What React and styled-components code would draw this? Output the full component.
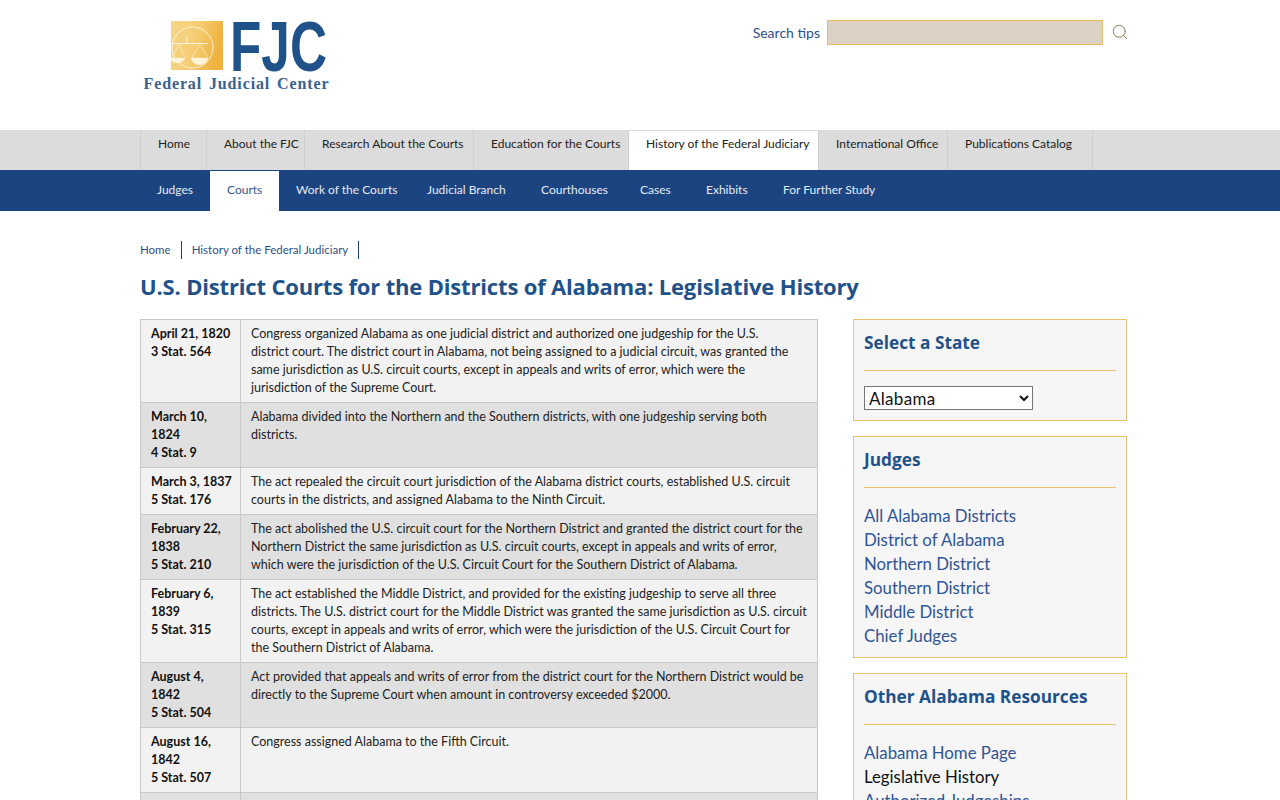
import React from 'react';
import styled, { createGlobalStyle } from 'styled-components';
import { Search } from 'lucide-react';

const rows = [
	{
		date: ['April 21, 1820', '3 Stat. 564'],
		text: [
			'Congress organized Alabama as one judicial district and authorized one judgeship for the U.S.',
			'district court. The district court in Alabama, not being assigned to a judicial circuit, was granted the',
			'same jurisdiction as U.S. circuit courts, except in appeals and writs of error, which were the',
			'jurisdiction of the Supreme Court.',
		],
	},
	{
		date: ['March 10,', '1824', '4 Stat. 9'],
		text: [
			'Alabama divided into the Northern and the Southern districts, with one judgeship serving both',
			'districts.',
		],
	},
	{
		date: ['March 3, 1837', '5 Stat. 176'],
		text: [
			'The act repealed the circuit court jurisdiction of the Alabama district courts, established U.S. circuit',
			'courts in the districts, and assigned Alabama to the Ninth Circuit.',
		],
	},
	{
		date: ['February 22,', '1838', '5 Stat. 210'],
		text: [
			'The act abolished the U.S. circuit court for the Northern District and granted the district court for the',
			'Northern District the same jurisdiction as U.S. circuit courts, except in appeals and writs of error,',
			'which were the jurisdiction of the U.S. Circuit Court for the Southern District of Alabama.',
		],
	},
	{
		date: ['February 6,', '1839', '5 Stat. 315'],
		text: [
			'The act established the Middle District, and provided for the existing judgeship to serve all three',
			'districts. The U.S. district court for the Middle District was granted the same jurisdiction as U.S. circuit',
			'courts, except in appeals and writs of error, which were the jurisdiction of the U.S. Circuit Court for',
			'the Southern District of Alabama.',
		],
	},
	{
		date: ['August 4,', '1842', '5 Stat. 504'],
		text: [
			'Act provided that appeals and writs of error from the district court for the Northern District would be',
			'directly to the Supreme Court when amount in controversy exceeded $2000.',
		],
	},
	{
		date: ['August 16,', '1842', '5 Stat. 507'],
		text: ['Congress assigned Alabama to the Fifth Circuit.'],
	},
	{
		date: ['', '', ''],
		text: [''],
	},
];

const topLinks = [
	'Home',
	'About the FJC',
	'Research About the Courts',
	'Education for the Courts',
	'History of the Federal Judiciary',
	'International Office',
	'Publications Catalog',
];

const subLinks = [
	'Judges',
	'Courts',
	'Work of the Courts',
	'Judicial Branch',
	'Courthouses',
	'Cases',
	'Exhibits',
	'For Further Study',
];

function Logo() {
	return (
		<LogoSvg viewBox="0 0 190 76" width="190" height="76">
			<defs>
				<linearGradient id="seal" x1="0" y1="0" x2="1" y2="0.25">
					<stop offset="0" stopColor="#f7d68a" />
					<stop offset="0.55" stopColor="#f5cc72" />
					<stop offset="1" stopColor="#efb23f" />
				</linearGradient>
				<clipPath id="sealClip">
					<rect x="28" y="2" width="52" height="49" />
				</clipPath>
			</defs>
			<rect x="28" y="2" width="52" height="49" fill="url(#seal)" />
			<g clipPath="url(#sealClip)" fill="none" stroke="#fdf3d8" strokeWidth="1">
				<circle cx="49.5" cy="28.5" r="20.5" />
				<path d="M28 24.5 H65 M44 18 V24.5" strokeWidth="1.2" />
				<path d="M36 25 L29 39 M36 25 L42 39 M57 25 L49 39 M57 25 L65 39" strokeWidth="0.6" />
				<path d="M28 39 H42 Q40 44 35 44 Q30 44 28 41 Z M48 39 H65 Q63 46 56.5 46 Q50 46 48 39 Z" fill="#fdf3d8" strokeWidth="0.4" />
			</g>
			<LogoMark x="87" y="51.5" textLength="97" lengthAdjust="spacingAndGlyphs">FJC</LogoMark>
			<LogoName x="0.5" y="70" textLength="185" lengthAdjust="spacing">Federal Judicial Center</LogoName>
		</LogoSvg>
	);
}

export default function App() {
	return (
		<>
			<GlobalStyle />
			<Header>
				<HeaderInner>
					<Logo />
					<SearchForm>
						<SearchTips href="#">Search tips</SearchTips>
						<SearchInput type="text" aria-label="Search" />
						<SearchIcon size={18} strokeWidth={1.3} />
					</SearchForm>
				</HeaderInner>
			</Header>
			<TopNav>
				<TopNavInner>
					{topLinks.map((label) => (
						<TopItem key={label} $active={label === 'History of the Federal Judiciary'}>
							{label}
						</TopItem>
					))}
				</TopNavInner>
			</TopNav>
			<SubNav>
				<SubNavInner>
					{subLinks.map((label) => (
						<SubItem key={label} $active={label === 'Courts'}>
							{label}
						</SubItem>
					))}
				</SubNavInner>
			</SubNav>
			<Page>
				<Breadcrumb>
					<Crumb>Home</Crumb>
					<Crumb>History of the Federal Judiciary</Crumb>
				</Breadcrumb>
				<Title>U.S. District Courts for the Districts of Alabama: Legislative History</Title>
				<Columns>
					<HistoryTable>
						<tbody>
							{rows.map((row, i) => (
								<Row key={i} $odd={i % 2 === 1}>
									<DateCell>
										{row.date.map((line, j) => (
											<Line key={j}>{line}</Line>
										))}
									</DateCell>
									<TextCell>
										{row.text.map((line, j) => (
											<Line key={j}>{line}</Line>
										))}
									</TextCell>
								</Row>
							))}
						</tbody>
					</HistoryTable>
					<Aside>
						<Box>
							<BoxTitle>Select a State</BoxTitle>
							<Rule />
							<StateSelect defaultValue="Alabama" aria-label="Select a State">
								<option>Alabama</option>
								<option>Alaska</option>
								<option>Arizona</option>
							</StateSelect>
						</Box>
						<Box>
							<BoxTitle>Judges</BoxTitle>
							<Rule />
							<LinkList>
								<SideLink>All Alabama Districts</SideLink>
								<SideLink>District of Alabama</SideLink>
								<SideLink>Northern District</SideLink>
								<SideLink>Southern District</SideLink>
								<SideLink>Middle District</SideLink>
								<SideLink>Chief Judges</SideLink>
							</LinkList>
						</Box>
						<Box>
							<BoxTitle>Other Alabama Resources</BoxTitle>
							<Rule />
							<LinkList>
								<SideLink>Alabama Home Page</SideLink>
								<SideLink $current>Legislative History</SideLink>
								<SideLink>Authorized Judgeships</SideLink>
							</LinkList>
						</Box>
					</Aside>
				</Columns>
			</Page>
		</>
	);
}

const GlobalStyle = createGlobalStyle`
	html, body {
		margin: 0;
		height: 800px;
		overflow: hidden;
		background: #fff;
	}
	body {
		font-family: 'Lato', 'Liberation Sans', sans-serif;
	}
`;

const Header = styled.header`
	height: 130px;
`;

const HeaderInner = styled.div`
	width: 989px;
	margin-left: 140px;
	display: flex;
	justify-content: space-between;
	align-items: flex-start;
`;

const LogoSvg = styled.svg`
	display: block;
	overflow: visible;
	margin: 19px 0 0 3px;
`;

const LogoMark = styled.text`
	font-family: 'Liberation Sans', sans-serif;
	font-size: 71px;
	font-weight: 700;
	fill: #1f5288;
`;

const LogoName = styled.text`
	font-family: 'Liberation Serif', serif;
	font-size: 16px;
	font-weight: 700;
	word-spacing: 2px;
	fill: #37628f;
`;

const SearchForm = styled.form`
	display: flex;
	align-items: center;
	margin-top: 20px;
`;

const SearchTips = styled.a`
	font-size: 14px;
	color: #2f4f8c;
	text-decoration: none;
	margin-right: 7px;
`;

const SearchInput = styled.input`
	width: 276px;
	height: 25px;
	box-sizing: border-box;
	background: #dcd2c4;
	border: 1px solid #e8bd62;
	margin-right: 8px;
	padding: 0;
`;

const SearchIcon = styled(Search)`
	color: #8a7a5c;
	display: block;
	margin-top: -2px;
`;

const TopNav = styled.nav`
	height: 40px;
	background: #dcdcdc;
`;

const TopNavInner = styled.div`
	margin-left: 140px;
	height: 40px;
	display: grid;
	grid-template-columns: 66px 98px 169px 155px 190px 129px 145px;
	justify-content: start;
	border-left: 1px solid #cfcfcf;
	width: max-content;
`;

const TopItem = styled.a`
	box-sizing: border-box;
	height: 40px;
	padding: 7px 0 0 17px;
	font-size: 12px;
	line-height: 14px;
	white-space: nowrap;
	color: #222;
	background: ${(p) => (p.$active ? '#fff' : 'transparent')};
	border-right: 1px solid #cfcfcf;
	${(p) => p.$active && 'border-top: 1px solid #dcdcdc; padding-top: 6px;'}
`;

const SubNav = styled.nav`
	height: 41px;
	background: #1c4480;
`;

const SubNavInner = styled.div`
	margin-left: 140px;
	height: 41px;
	display: grid;
	grid-template-columns: 70px 69px 131px 114px 99px 66px 77px max-content;
	justify-content: start;
	width: max-content;
`;

const SubItem = styled.a`
	box-sizing: border-box;
	padding-left: 17px;
	font-size: 12px;
	line-height: 40px;
	white-space: nowrap;
	color: ${(p) => (p.$active ? '#33578f' : '#e4ebf5')};
	background: ${(p) => (p.$active ? 'linear-gradient(#1c4480 1px, #fff 1px)' : 'transparent')};
`;

const Page = styled.main`
	margin-left: 140px;
	width: 987px;
`;

const Breadcrumb = styled.div`
	display: flex;
	margin-top: 30px;
	height: 18px;
	align-items: center;
`;

const Crumb = styled.a`
	font-size: 11.5px;
	line-height: 18px;
	color: #2f4f8c;
	padding-right: 10px;
	margin-right: 10px;
	border-right: 1px solid #1c4480;
`;

const Title = styled.h1`
	margin: 12px 0 18px;
	font-family: 'Open Sans', 'Noto Sans', sans-serif;
	font-size: 22px;
	line-height: 30px;
	font-weight: 700;
	letter-spacing: -0.17px;
	color: #1f5288;
`;

const Columns = styled.div`
	display: flex;
	justify-content: space-between;
	align-items: flex-start;
`;

const HistoryTable = styled.table`
	width: 678px;
	border-collapse: collapse;
	table-layout: fixed;
	font-size: 12.5px;
	line-height: 18px;
	color: #222;
`;

const Row = styled.tr`
	background: ${(p) => (p.$odd ? '#e0e0e0' : '#f2f2f2')};
`;

const DateCell = styled.td`
	width: 100px;
	box-sizing: border-box;
	vertical-align: top;
	padding: 5px 10px 5px 10px;
	border: 1px solid #c8c8c8;
	font-weight: 700;
	color: #111;
`;

const TextCell = styled.td`
	vertical-align: top;
	padding: 5px 10px 5px 10px;
	border: 1px solid #c8c8c8;
`;

const Line = styled.div`
	white-space: nowrap;
	min-height: 18px;
`;

const Aside = styled.aside`
	width: 274px;
	display: flex;
	flex-direction: column;
	gap: 15px;
`;

const Box = styled.section`
	box-sizing: border-box;
	background: #f6f6f7;
	border: 1px solid #ecc26c;
	padding: 10px 10px 10px;
`;

const BoxTitle = styled.h2`
	margin: 0;
	font-family: 'Open Sans', 'Noto Sans', sans-serif;
	font-size: 17.25px;
	line-height: 26px;
	font-weight: 700;
	color: #1f5288;
`;

const Rule = styled.hr`
	border: 0;
	border-top: 1px solid #ecc26c;
	margin: 14px 0 15px;
`;

const StateSelect = styled.select`
	display: block;
	width: 169px;
	height: 24px;
	font-family: 'Lato', sans-serif;
	font-size: 17px;
	letter-spacing: 0.3px;
	line-height: 20px;
	color: #111;
	background: #fff;
`;

const LinkList = styled.div`
	display: flex;
	flex-direction: column;
	margin: 16px 0 -1px;
`;

const SideLink = styled.a`
	font-size: 16.8px;
	line-height: 24px;
	color: ${(p) => (p.$current ? '#111' : '#2f5596')};
`;
